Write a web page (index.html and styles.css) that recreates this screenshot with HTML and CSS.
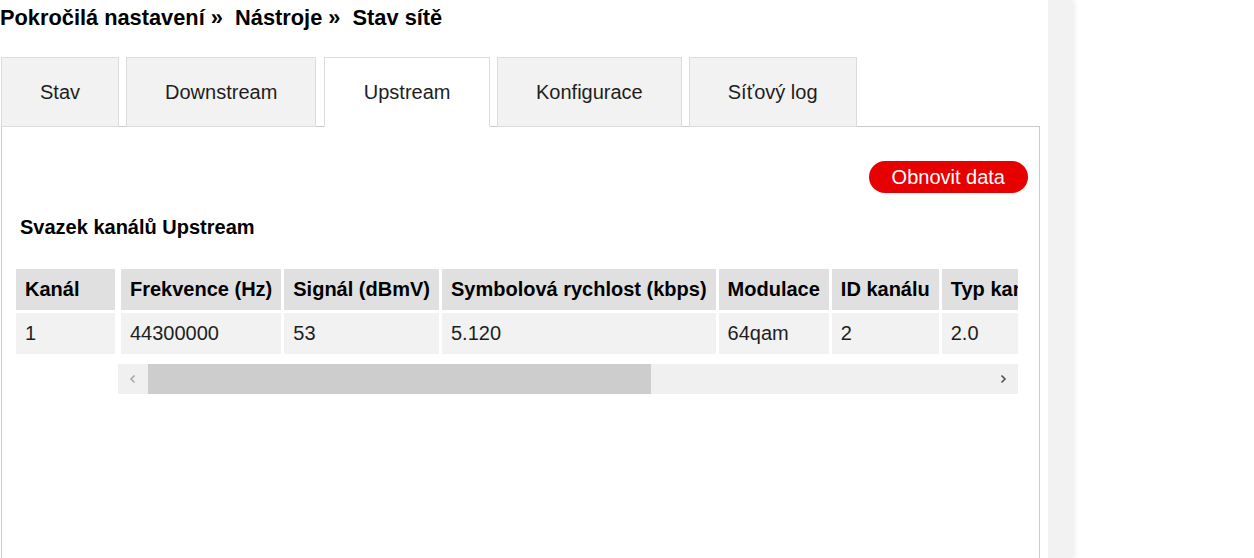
FILE: index.html
```html
<!DOCTYPE html>
<html lang="cs">
<head>
<meta charset="utf-8">
<title>Stav sítě</title>
<link rel="stylesheet" href="styles.css">
</head>
<body>
<div class="page">
  <div class="main">
    <div class="breadcrumb">Pokročilá nastavení »&nbsp; Nástroje »&nbsp; Stav sítě</div>
    <div class="tabs">
      <div class="tab">Stav</div>
      <div class="tab">Downstream</div>
      <div class="tab active">Upstream</div>
      <div class="tab">Konfigurace</div>
      <div class="tab">Síťový log</div>
    </div>
    <div class="panel">
      <div class="actions">
        <button class="btn">Obnovit data</button>
      </div>
      <h2 class="section-title">Svazek kanálů Upstream</h2>
      <div class="grid">
        <table class="fixed">
          <tr><th>Kanál</th></tr>
          <tr><td>1</td></tr>
        </table>
        <div class="scroll">
          <div class="scroll-view">
            <table class="data">
              <tr>
                <th>Frekvence (Hz)</th>
                <th>Signál (dBmV)</th>
                <th>Symbolová rychlost (kbps)</th>
                <th>Modulace</th>
                <th>ID kanálu</th>
                <th>Typ kanálu</th>
              </tr>
              <tr>
                <td>44300000</td>
                <td>53</td>
                <td>5.120</td>
                <td>64qam</td>
                <td>2</td>
                <td>2.0</td>
              </tr>
            </table>
          </div>
          <div class="scrollbar">
            <div class="sb-btn">
              <svg width="30" height="30" viewBox="0 0 30 30"><path d="M16.5 11.5 L13 15 L16.5 18.5" fill="none" stroke="#a8a8a8" stroke-width="1.6"/></svg>
            </div>
            <div class="sb-track">
              <div class="sb-thumb"></div>
            </div>
            <div class="sb-btn">
              <svg width="30" height="30" viewBox="0 0 30 30"><path d="M13.5 11.5 L17 15 L13.5 18.5" fill="none" stroke="#505050" stroke-width="1.6"/></svg>
            </div>
          </div>
        </div>
      </div>
    </div>
  </div>
  <div class="strip"></div>
</div>
</body>
</html>
```
FILE: styles.css
```css
html, body {
  margin: 0;
  padding: 0;
  overflow: hidden;
  background: #fff;
}
body {
  font-family: "Liberation Sans", Arial, sans-serif;
  color: #1e1e1e;
}
.page {
  display: flex;
  height: 558px;
}
.main {
  width: 1040px;
  flex: none;
}
.strip {
  width: 24px;
  margin-left: 8px;
  height: 100%;
  background: #f2f2f2;
  box-shadow: 3px 0 5px rgba(0, 0, 0, 0.07);
}
.breadcrumb {
  margin-top: 4px;
  font-size: 21.8px;
  line-height: 27px;
  font-weight: bold;
  color: #000;
  white-space: nowrap;
}
.tabs {
  display: flex;
  gap: 7px;
  margin-top: 26px;
  margin-left: 1px;
  position: relative;
  z-index: 1;
  margin-bottom: -1px;
}
.tab {
  box-sizing: border-box;
  height: 70px;
  padding: 0 38px;
  display: flex;
  align-items: center;
  background: #f2f2f2;
  border: 1px solid #dcdcdc;
  font-size: 20px;
  color: #1e1e1e;
  white-space: nowrap;
}
.tab.active {
  margin-left: 1px;
  padding: 0 38.5px;
  background: #fff;
  border-bottom-color: #fff;
}
.panel {
  margin-left: 1px;
  box-sizing: border-box;
  height: 450px;
  border: 1px solid #cbcbcb;
  padding-top: 34px;
}
.actions {
  display: flex;
  justify-content: flex-end;
  padding-right: 11px;
}
.btn {
  height: 32px;
  border: none;
  border-radius: 16px;
  padding: 0 23px;
  background: #e60000;
  color: #fff;
  font-family: "Liberation Sans", Arial, sans-serif;
  font-size: 20px;
  line-height: 32px;
}
.section-title {
  margin: 22px 0 0 0;
  padding-left: 18px;
  font-size: 20px;
  line-height: 24px;
  font-weight: bold;
  color: #000;
}
.grid {
  display: flex;
  margin-top: 27px;
  margin-left: 14px;
  width: 1002px;
}
table {
  border-collapse: separate;
  font-size: 20px;
}
th, td {
  height: 41px;
  padding: 0 9px;
  text-align: left;
  vertical-align: middle;
  white-space: nowrap;
}
th {
  background: #e0e0e0;
  font-weight: bold;
  color: #000;
}
td {
  background: #f2f2f2;
  color: #1e1e1e;
}
.fixed {
  border-spacing: 0 3px;
  margin-right: 3px;
  flex: none;
  align-self: flex-start;
}
.fixed th, .fixed td {
  box-sizing: border-box;
  width: 99px;
}
.scroll {
  flex: 1;
  min-width: 0;
  display: flex;
  flex-direction: column;
}
.scroll-view {
  overflow: hidden;
}
.data {
  border-spacing: 3px;
}
.scrollbar {
  margin-top: 7px;
  height: 30px;
  display: flex;
  background: #f0f0f0;
}
.sb-btn {
  width: 30px;
  height: 30px;
  flex: none;
}
.sb-btn svg {
  display: block;
}
.sb-track {
  flex: 1;
}
.sb-thumb {
  width: 503px;
  height: 30px;
  background: #cdcdcd;
}
```
